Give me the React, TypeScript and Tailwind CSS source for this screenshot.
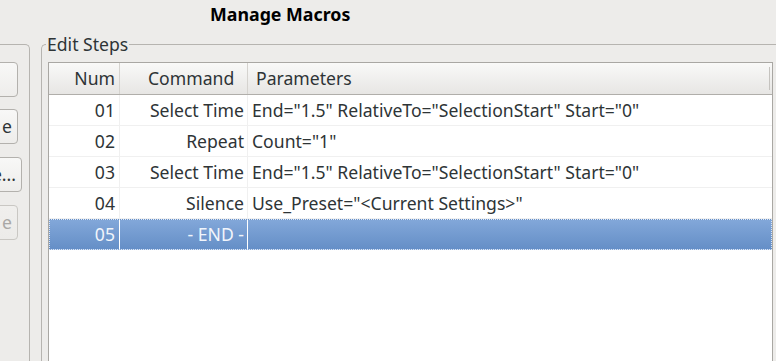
const font = { fontFamily: '"Noto Sans", "Open Sans", sans-serif' };

const steps = [
  { num: "01", cmd: "Select Time", params: 'End="1.5" RelativeTo="SelectionStart" Start="0"' },
  { num: "02", cmd: "Repeat", params: 'Count="1"' },
  { num: "03", cmd: "Select Time", params: 'End="1.5" RelativeTo="SelectionStart" Start="0"' },
  { num: "04", cmd: "Silence", params: 'Use_Preset="<Current Settings>"' },
];

function SideButton({ label, wide = false, disabled = false }: { label: string; wide?: boolean; disabled?: boolean }) {
  return (
    <div
      className={
        "h-[35px] -ml-[42px] rounded-[4px] border bg-gradient-to-b flex items-center justify-end pr-[5px] text-[17.6px] whitespace-nowrap " +
        (wide ? "w-[64px] " : "w-[60px] ") +
        (disabled
          ? "text-[#a9a8a6] border-[#c9c7c3] from-[#f0efed] to-[#ecebe9]"
          : "text-[#2e3436] border-[#b3b1ad] from-[#f8f8f7] to-[#eeedeb]")
      }
    >
      {label}
    </div>
  );
}

export default function App() {
  return (
    <div className="w-[776px] h-[361px] overflow-hidden bg-[#edecea] text-[#2e3436]" style={font}>
      <div className="h-[28px] pl-[210px] flex items-center text-[17.8px] font-bold text-black">Manage Macros</div>
      <div className="flex mt-[16px]">
        {/* left group, cut off */}
        <div className="w-[30px] shrink-0 h-[320px] border-t border-r border-[#b6b4b0] rounded-tr-[5px] flex flex-col items-start pt-[17px]">
          <SideButton label="" />
          <div className="mt-[12px]">
            <SideButton label="e" />
          </div>
          <div className="mt-[13px]">
            <SideButton label="e..." wide />
          </div>
          <div className="mt-[13px]">
            <SideButton label="e" disabled />
          </div>
        </div>

        {/* Edit Steps group */}
        <div className="relative shrink-0 ml-[11px] w-[800px] h-[320px] border-t border-l border-[#b6b4b0] rounded-tl-[5px] pl-[6px] pt-[17px]">
          <div className="absolute -top-[13px] left-[4px] px-[1px] bg-[#edecea] text-[17.6px] leading-[24px]">Edit Steps</div>
          <div className="w-[725px] h-[320px] border border-[#a9a7a3] bg-white text-[17.6px]">
            <div className="flex h-[32px] border-b border-[#b0aeaa] bg-gradient-to-b from-[#f9f9f8] to-[#e7e6e4]">
              <div className="w-[71px] border-r border-[#d5d3cf] flex items-center justify-end pr-[4px]">Num</div>
              <div className="w-[128px] border-r border-[#d5d3cf] flex items-center pl-[28px]">Command</div>
              <div className="flex-1 flex items-center pl-[8px]">Parameters</div>
              <div className="w-[3px] my-[4px] border-l border-[#c5c3bf]" />
            </div>
            {steps.map((s) => (
              <div key={s.num} className="flex h-[31px] border-b border-[#f0f0f0]">
                <div className="w-[71px] border-r border-[#f0f0f0] flex items-center justify-end pr-[4px]">{s.num}</div>
                <div className="w-[128px] border-r border-[#f0f0f0] flex items-center justify-end pr-[3px] whitespace-nowrap">
                  {s.cmd}
                </div>
                <div className="flex-1 flex items-center pl-[4px] whitespace-nowrap">{s.params}</div>
              </div>
            ))}
            <div className="flex h-[31px] bg-gradient-to-b from-[#82a7d9] to-[#658fc7] text-[#f1f5fb] border border-dotted border-[#dfe8f5]">
              <div className="w-[70px] border-r border-white flex items-center justify-end pr-[4px]">05</div>
              <div className="w-[128px] border-r border-white flex items-center justify-end pr-[3px]">- END -</div>
              <div className="flex-1" />
            </div>
          </div>
        </div>
      </div>
    </div>
  );
}
